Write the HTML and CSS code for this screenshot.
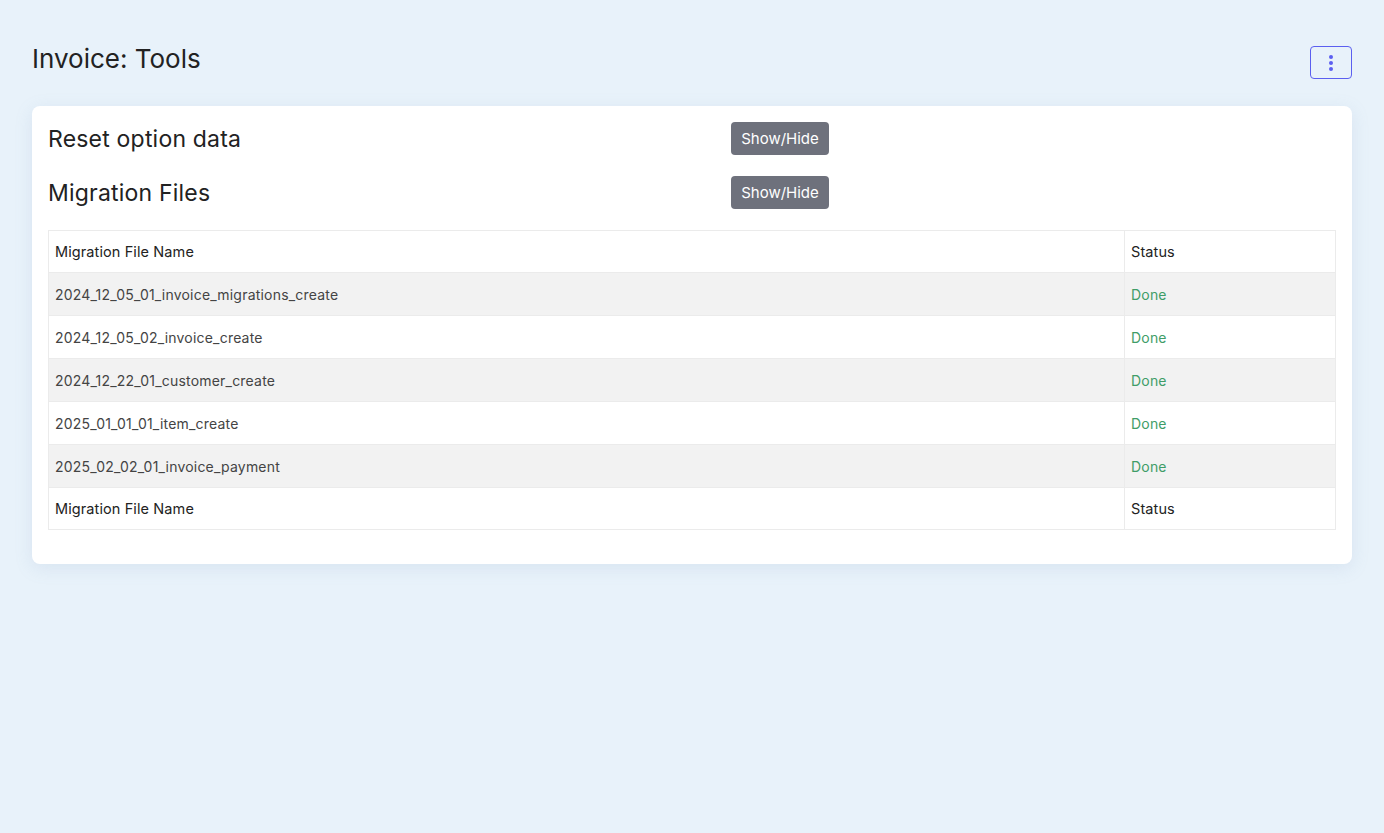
FILE: index.html
```html
<!DOCTYPE html>
<html lang="en">
<head>
    <meta charset="UTF-8">
    <meta name="viewport" content="width=device-width, initial-scale=1.0">
    <title>Invoice: Tools</title>
    <link rel="stylesheet" href="styles.css">
</head>
<body>

    <div class="page">
        <div class="page-head">
            <h1 class="page-title">Invoice: Tools</h1>
            <button class="menu-btn" type="button" aria-label="More">
                <svg width="4" height="16" viewBox="0 0 4 16">
                    <circle cx="2" cy="2" r="2" fill="#5b5ff0"/>
                    <circle cx="2" cy="8" r="2" fill="#5b5ff0"/>
                    <circle cx="2" cy="14" r="2" fill="#5b5ff0"/>
                </svg>
            </button>
        </div>

        <div class="card">
            <div class="tool-row">
                <h2 class="tool-title">Reset option data</h2>
                <div><button class="toggle-btn" type="button">Show/Hide</button></div>
            </div>
            <div class="tool-row">
                <h2 class="tool-title">Migration Files</h2>
                <div><button class="toggle-btn" type="button">Show/Hide</button></div>
            </div>

            <table class="mig-table">
                <thead>
                    <tr>
                        <th>Migration File Name</th>
                        <th class="col-status">Status</th>
                    </tr>
                </thead>
                <tbody>
                    <tr><td>2024_12_05_01_invoice_migrations_create</td><td class="done">Done</td></tr>
                    <tr><td>2024_12_05_02_invoice_create</td><td class="done">Done</td></tr>
                    <tr><td>2024_12_22_01_customer_create</td><td class="done">Done</td></tr>
                    <tr><td>2025_01_01_01_item_create</td><td class="done">Done</td></tr>
                    <tr><td>2025_02_02_01_invoice_payment</td><td class="done">Done</td></tr>
                </tbody>
                <tfoot>
                    <tr>
                        <th>Migration File Name</th>
                        <th>Status</th>
                    </tr>
                </tfoot>
            </table>
        </div>
    </div>

</body>
</html>
```

FILE: styles.css
```css
body {
    margin: 0;
    background: #e8f2fa;
    font-family: "Inter", "Open Sans", sans-serif;
    color: #212529;
}

.page {
    padding: 32px 32px;
}

.page-head {
    display: flex;
    justify-content: space-between;
    align-items: flex-start;
    height: 74px;
}

.page-title {
    margin: 9px 0 0 0;
    font-size: 26px;
    font-weight: 400;
    line-height: 36px;
    color: #222;
}

.menu-btn {
    margin-top: 14px;
    width: 42px;
    height: 33px;
    display: flex;
    align-items: center;
    justify-content: center;
    background: transparent;
    border: 1px solid #5b5ff0;
    border-radius: 4px;
    padding: 0;
}

/* Card */
.card {
    background: #fff;
    border-radius: 8px;
    padding: 16px 16px 34px 16px;
    box-shadow: 0 4px 18px rgba(120, 150, 190, 0.15);
}

.tool-row {
    display: grid;
    grid-template-columns: 683px auto;
    align-items: center;
    height: 33px;
    margin-bottom: 21px;
}

.tool-title {
    margin: 0;
    font-size: 23px;
    font-weight: 400;
    letter-spacing: 0.2px;
    color: #222;
}

.toggle-btn {
    height: 33px;
    width: 98px;
    padding: 0;
    border: none;
    border-radius: 4px;
    background: #6e717c;
    color: #fff;
    font-family: inherit;
    font-size: 15px;
}

/* Table */
.mig-table {
    width: 100%;
    border-collapse: collapse;
}

.mig-table th,
.mig-table td {
    border: 1px solid #ebebeb;
    text-align: left;
    padding: 0 6px;
}

.mig-table th {
    height: 41px;
    font-size: 14.5px;
    font-weight: 400;
    letter-spacing: 0.1px;
    color: #222;
}

.mig-table td {
    height: 42px;
    font-size: 14px;
    letter-spacing: 0.2px;
    color: #444;
}

.mig-table tbody tr:nth-child(odd) {
    background: #f2f2f2;
}

.mig-table .col-status {
    width: 198px;
}

.mig-table td.done {
    color: #3f9d68;
}
```
